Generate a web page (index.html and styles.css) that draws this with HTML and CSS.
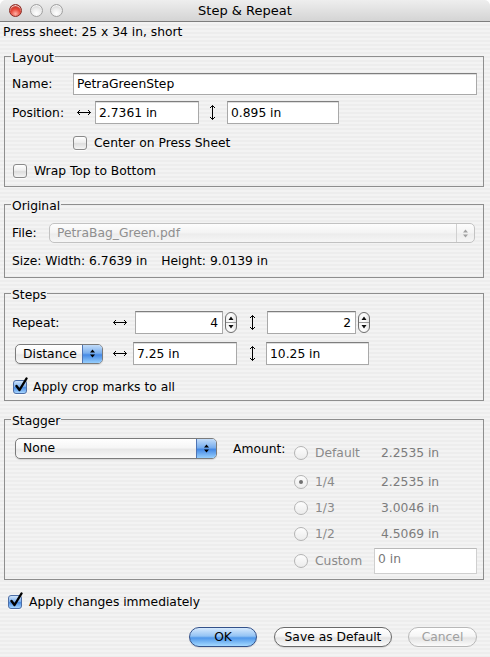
FILE: index.html
```html
<!DOCTYPE html>
<html>
<head>
<meta charset="utf-8">
<title>Step &amp; Repeat</title>
<link rel="stylesheet" href="styles.css">
</head>
<body>
<div class="window">
  <div class="titlebar">
    <div class="lights">
      <span class="light close"></span>
      <span class="light"></span>
      <span class="light"></span>
    </div>
    <div class="title">Step &amp; Repeat</div>
    <div></div>
  </div>

  <div class="content">
    <div class="press">Press sheet: 25 x 34 in, short</div>

    <fieldset class="group g-layout">
      <legend>Layout</legend>
      <div class="row r-name">
        <span class="lbl w-name">Name:</span>
        <span class="tf tf-name">PetraGreenStep</span>
      </div>
      <div class="row r-pos">
        <span class="lbl w-name">Position:</span>
        <svg class="harrow a-pos" width="14" height="7" viewBox="0 0 14 7"><path d="M0.5 3.5H13.5M3 1L0.5 3.5L3 6M11 1L13.5 3.5L11 6" fill="none" stroke="#000" stroke-width="1"/></svg>
        <span class="tf tf-pos1">2.7361 in</span>
        <svg class="varrow va-pos" width="7" height="15" viewBox="0 0 7 15"><path d="M3.5 0.5V14.5M1 3L3.5 0.5L6 3M1 12L3.5 14.5L6 12" fill="none" stroke="#000" stroke-width="1"/></svg>
        <span class="tf tf-pos2">0.895 in</span>
      </div>
      <div class="row r-center">
        <span class="cb"></span><span class="cbl">Center on Press Sheet</span>
      </div>
      <div class="row r-wrap">
        <span class="cb"></span><span class="cbl">Wrap Top to Bottom</span>
      </div>
    </fieldset>

    <fieldset class="group g-original">
      <legend>Original</legend>
      <div class="row r-file">
        <span class="lbl w-file">File:</span>
        <span class="popup popup-dis popup-file">
          <span class="ptext">PetraBag_Green.pdf</span>
          <span class="parrow"><svg width="7" height="11" viewBox="0 0 7 11"><path d="M1 4.5L3.5 1.5L6 4.5Z M1 6.5L3.5 9.5L6 6.5Z" fill="#a0a0a0"/></svg></span>
        </span>
      </div>
      <div class="row r-size">
        <span>Size: Width: 6.7639 in</span><span class="height">Height: 9.0139 in</span>
      </div>
    </fieldset>

    <fieldset class="group g-steps">
      <legend>Steps</legend>
      <div class="row r-repeat">
        <span class="lbl w-repeat">Repeat:</span>
        <svg class="harrow a-rep" width="14" height="7" viewBox="0 0 14 7"><path d="M0.5 3.5H13.5M3 1L0.5 3.5L3 6M11 1L13.5 3.5L11 6" fill="none" stroke="#000" stroke-width="1"/></svg>
        <span class="tf tf-num tf-rep1">4</span>
        <span class="stepper"><svg width="10" height="19" viewBox="0 0 10 19"><path d="M2.5 7L5 3.5L7.5 7Z M2.5 12L5 15.5L7.5 12Z" fill="#111"/><path d="M0 9.5H10" stroke="#9a9a9a" stroke-width="1"/></svg></span>
        <svg class="varrow va-rep" width="7" height="15" viewBox="0 0 7 15"><path d="M3.5 0.5V14.5M1 3L3.5 0.5L6 3M1 12L3.5 14.5L6 12" fill="none" stroke="#000" stroke-width="1"/></svg>
        <span class="tf tf-num tf-rep2">2</span>
        <span class="stepper"><svg width="10" height="19" viewBox="0 0 10 19"><path d="M2.5 7L5 3.5L7.5 7Z M2.5 12L5 15.5L7.5 12Z" fill="#111"/><path d="M0 9.5H10" stroke="#9a9a9a" stroke-width="1"/></svg></span>
      </div>
      <div class="row r-dist">
        <span class="popup popup-dist">
          <span class="ptext">Distance</span>
          <span class="parrow"><svg width="7" height="11" viewBox="0 0 7 11"><path d="M1 4.5L3.5 1.5L6 4.5Z M1 6.5L3.5 9.5L6 6.5Z" fill="#000"/></svg></span>
        </span>
        <svg class="harrow a-dist" width="14" height="7" viewBox="0 0 14 7"><path d="M0.5 3.5H13.5M3 1L0.5 3.5L3 6M11 1L13.5 3.5L11 6" fill="none" stroke="#000" stroke-width="1"/></svg>
        <span class="tf tf-dist1">7.25 in</span>
        <svg class="varrow va-dist" width="7" height="15" viewBox="0 0 7 15"><path d="M3.5 0.5V14.5M1 3L3.5 0.5L6 3M1 12L3.5 14.5L6 12" fill="none" stroke="#000" stroke-width="1"/></svg>
        <span class="tf tf-dist2">10.25 in</span>
      </div>
      <div class="row r-crop">
        <span class="cb on"><svg width="14" height="16" viewBox="0 0 14 16"><path d="M2.5 9L5.5 13L12.5 1.5" fill="none" stroke="#000" stroke-width="2.4" stroke-linecap="round" stroke-linejoin="round"/></svg></span><span class="cbl">Apply crop marks to all</span>
      </div>
    </fieldset>

    <fieldset class="group g-stagger">
      <legend>Stagger</legend>
      <div class="stagger">
        <span class="popup popup-none">
          <span class="ptext">None</span>
          <span class="parrow"><svg width="7" height="11" viewBox="0 0 7 11"><path d="M1 4.5L3.5 1.5L6 4.5Z M1 6.5L3.5 9.5L6 6.5Z" fill="#000"/></svg></span>
        </span>
        <span class="amount">Amount:</span>
        <div class="radios">
          <div class="rrow"><span class="radio"></span><span class="rlbl">Default</span><span class="rval">2.2535 in</span></div>
          <div class="rrow r2"><span class="radio on"></span><span class="rlbl">1/4</span><span class="rval">2.2535 in</span></div>
          <div class="rrow r3"><span class="radio"></span><span class="rlbl">1/3</span><span class="rval">3.0046 in</span></div>
          <div class="rrow r3"><span class="radio"></span><span class="rlbl">1/2</span><span class="rval">4.5069 in</span></div>
          <div class="rrow rc"><span class="radio"></span><span class="rlbl rlbl-c">Custom</span><span class="tf tf-custom">0 in</span></div>
        </div>
      </div>
    </fieldset>

    <div class="row r-apply">
      <span class="cb on"><svg width="14" height="16" viewBox="0 0 14 16"><path d="M2.5 9L5.5 13L12.5 1.5" fill="none" stroke="#000" stroke-width="2.4" stroke-linecap="round" stroke-linejoin="round"/></svg></span><span class="cbl">Apply changes immediately</span>
    </div>

    <div class="buttons">
      <button class="btn btn-ok">OK</button>
      <button class="btn btn-save">Save as Default</button>
      <button class="btn btn-cancel">Cancel</button>
    </div>
  </div>
</div>
</body>
</html>
```

FILE: styles.css
```css
* { box-sizing: border-box; }
html, body { margin: 0; padding: 0; background: #fff; }
body {
  font-family: "DejaVu Sans", "Lucida Grande", sans-serif;
  font-size: 12.3px;
  color: #000;
}
.window {
  width: 490px;
  height: 657px;
  overflow: hidden;
  border-radius: 6px 6px 0 0;
  background: repeating-linear-gradient(to bottom, #ededed 0, #ededed 2px, #f3f3f3 2px, #f3f3f3 4px);
}

/* title bar */
.titlebar {
  height: 22px;
  display: grid;
  grid-template-columns: 1fr auto 1fr;
  align-items: center;
  background: linear-gradient(#eeeeee, #d4d4d4);
  border-bottom: 1px solid #7d7d7d;
}
.lights { display: flex; gap: 7.5px; padding-left: 9px; }
.light {
  width: 13px; height: 13px; border-radius: 50%;
  border: 1px solid #a0a0a0;
  background: radial-gradient(circle at 50% 75%, #ffffff 0, #ececec 45%, #c4c4c4 100%);
  box-shadow: inset 0 1px 1px rgba(255,255,255,0.9);
}
.light.close {
  border-color: #8a2a22;
  background: radial-gradient(circle at 50% 80%, #ffb2a6 0, #e8493a 45%, #a3190f 100%);
}
.title { font-size: 13px; line-height: 21px; }

/* content */
.content { padding: 0 6px 0 4px; }
.press { margin-top: 3px; margin-left: -1px; line-height: 15px; }

.group {
  margin: 8px 0 0;
  padding: 0 0 8px 7px;
  border: 1px solid #8e8e8e;
  min-width: 0;
}
.group legend {
  padding: 3px 1px 0;
  margin-left: -1px;
  line-height: 14px;
}
.g-original { margin-top: 9px; padding-bottom: 8px; }
.g-steps { margin-top: 7px; padding-bottom: 6px; }
.g-stagger { margin-top: 10px; padding-bottom: 5px; }

.row { display: flex; align-items: center; }
.lbl { flex: none; }
.w-name { width: 61px; }
.w-file { width: 37px; }
.w-repeat { width: 101px; }

/* text fields */
.tf {
  flex: none;
  display: flex;
  align-items: center;
  height: 23px;
  padding: 0 3px;
  background: #fff;
  border: 1px solid #a9a9a9;
  border-top-color: #7e7e7e;
  box-shadow: inset 0 1px 0 #dedede;
  white-space: nowrap;
}
.tf-num { justify-content: flex-end; padding-right: 4px; }

.r-name { margin-top: 8px; height: 22px; }
.tf-name { width: 404px; height: 22px; }
.r-pos { margin-top: 6px; height: 23px; }
.a-pos { margin-left: 4px; flex: none; }
.tf-pos1 { width: 104px; margin-left: 4px; }
.va-pos { margin-left: 10px; flex: none; }
.tf-pos2 { width: 112px; margin-left: 11px; }

.r-center { margin-top: 12px; height: 14px; padding-left: 61px; }
.r-wrap { margin-top: 14px; height: 14px; padding-left: 1px; }

/* checkboxes */
.cb {
  flex: none;
  width: 14px; height: 14px;
  border: 1px solid #8a8a8a;
  border-radius: 3px;
  background: linear-gradient(#ffffff, #ececec 50%, #dedede 55%, #f5f5f5);
  box-shadow: 0 1px 0 rgba(255,255,255,0.8);
  position: relative;
}
.cb.on {
  border-color: #4d6ea6;
  background: linear-gradient(#cfe4fb, #7fb1ee 45%, #4a8ce4 55%, #a7d6ff);
}
.cb.on svg { position: absolute; left: 0; top: -4px; }
.cbl { margin-left: 7px; white-space: nowrap; }

/* popups */
.popup {
  flex: none;
  display: flex;
  height: 20px;
  border: 1px solid #7b7b7b;
  border-radius: 5px;
  overflow: hidden;
  background: linear-gradient(#ffffff 0%, #f6f6f6 45%, #e8e8e8 55%, #f8f8f8 100%);
  box-shadow: 0 1px 1px rgba(0,0,0,0.12);
}
.ptext { flex: 1; padding-left: 7px; line-height: 18px; white-space: nowrap; }
.parrow {
  flex: none;
  width: 20px;
  display: flex; align-items: center; justify-content: center;
  border-left: 1px solid #4f74b3;
  background: linear-gradient(#c2dcf9 0%, #79aeee 45%, #4589e5 55%, #97cffd 100%);
}
.popup-dis {
  border-color: #c2c2c2;
  background: linear-gradient(#fdfdfd, #f3f3f3 50%, #ececec 55%, #f6f6f6);
  box-shadow: none;
  color: #8f8f8f;
}
.popup-dis .parrow {
  border-left: 1px solid #d0d0d0;
  background: transparent;
  width: 18px;
}
.popup-file { width: 426px; }
.popup-dist { width: 88px; margin-left: 3px; }
.popup-none { width: 202px; height: 21px; margin-left: 3px; }
.popup-none .ptext { line-height: 19px; }

/* original */
.r-file { margin-top: 10px; height: 20px; }
.r-size { margin-top: 11px; height: 15px; line-height: 15px; white-space: nowrap; }
.height { margin-left: 14px; }

/* steps */
.r-repeat { margin-top: 9px; height: 23px; }
.a-rep { flex: none; }
.tf-rep1 { width: 88px; margin-left: 8px; }
.stepper {
  flex: none;
  width: 12px; height: 21px;
  margin-left: 2px;
  border: 1px solid #6f6f6f;
  border-radius: 6px;
  background: linear-gradient(to right, #f2f2f2, #ffffff 50%, #e4e4e4);
  display: flex; align-items: center; justify-content: center;
  overflow: hidden;
}
.va-rep { flex: none; margin-left: 12px; }
.tf-rep2 { width: 89px; margin-left: 11px; }

.r-dist { margin-top: 8px; height: 23px; }
.a-dist { flex: none; margin-left: 10px; }
.tf-dist1 { width: 104px; margin-left: 6px; }
.va-dist { flex: none; margin-left: 12px; }
.tf-dist2 { width: 103px; margin-left: 10px; }

.r-crop { margin-top: 15px; height: 14px; padding-left: 1px; }
.r-crop .cbl { margin-left: 6px; }

/* stagger */
.stagger { display: flex; align-items: flex-start; padding-top: 10px; }
.amount { flex: none; width: 61px; margin-left: 16px; margin-top: 4px; line-height: 15px; }
.radios { display: flex; flex-direction: column; margin-top: 7px; }
.rrow { display: flex; align-items: center; height: 16px; color: #8a8a8a; }
.r2 { margin-top: 13px; }
.r3 { margin-top: 10px; }
.rc { margin-top: 6px; height: 26px; }
.radio {
  flex: none;
  width: 14px; height: 14px;
  border-radius: 50%;
  border: 1px solid #b4b4b4;
  background: linear-gradient(#fdfdfd, #ececec);
  display: flex; align-items: center; justify-content: center;
}
.radio.on::after {
  content: "";
  width: 4px; height: 4px;
  border-radius: 50%;
  background: #707070;
}
.rlbl { width: 73px; padding-left: 7px; flex: none; }
.rlbl-c { width: 66px; }
.rval { color: #7c7c7c; white-space: nowrap; }
.tf-custom {
  width: 103px; height: 26px;
  border-color: #cfcfcf; border-top-color: #b9b9b9;
  box-shadow: none;
  color: #777;
  align-items: flex-start;
  padding-top: 3px;
}

/* bottom */
.r-apply { margin-top: 15px; height: 14px; padding-left: 4px; }
.buttons {
  display: flex;
  justify-content: flex-end;
  margin-top: 18px;
  padding-right: 7px;
  gap: 16px;
}
.btn {
  height: 20px;
  padding: 0;
  border-radius: 10px;
  border: 1px solid #6a6a6a;
  background: linear-gradient(#ffffff, #f6f6f6 45%, #e4e4e4 55%, #fbfbfb);
  font-family: inherit;
  font-size: 12.3px;
  line-height: 18px;
  color: #000;
  text-align: center;
  box-shadow: 0 1px 1px rgba(0,0,0,0.12);
}
.btn-ok {
  width: 68px;
  margin-right: 1px;
  border-color: #33518a;
  background: linear-gradient(#d6e9fd, #93c3f4 45%, #4f97ea 55%, #a4d9ff);
}
.btn-save { width: 118px; }
.btn-cancel { width: 69px; border-color: #b8b8b8; color: #a0a0a0; box-shadow: none; }
```
